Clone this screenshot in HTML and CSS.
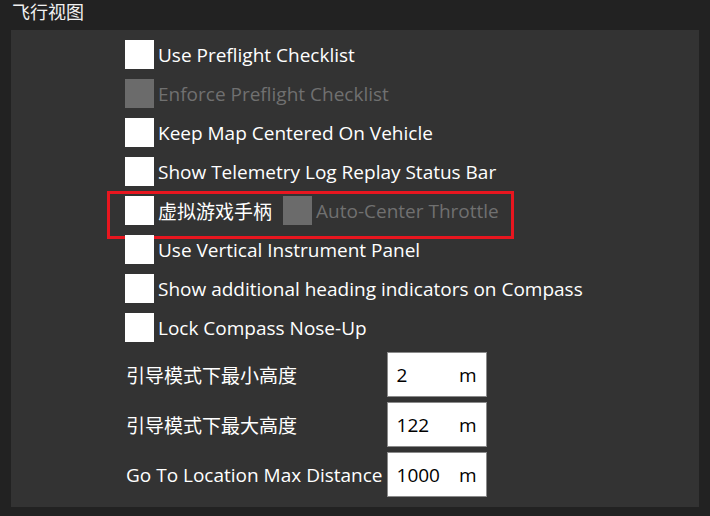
FILE: index.html
```html
<!DOCTYPE html>
<html lang="zh">
<head>
<meta charset="utf-8">
<title>飞行视图</title>
<link rel="stylesheet" href="styles.css">
</head>
<body>
<div class="title">飞行视图</div>
<div class="panel">
  <div class="checks">
    <div class="row"><span class="box"></span><span class="lbl">Use Preflight Checklist</span></div>
    <div class="row disabled"><span class="box"></span><span class="lbl">Enforce Preflight Checklist</span></div>
    <div class="row"><span class="box"></span><span class="lbl">Keep Map Centered On Vehicle</span></div>
    <div class="row"><span class="box"></span><span class="lbl">Show Telemetry Log Replay Status Bar</span></div>
    <div class="row joy">
      <span class="box"></span><span class="lbl">虚拟游戏手柄</span>
      <span class="sub disabled"><span class="box"></span><span class="lbl">Auto-Center Throttle</span></span>
      <span class="highlight"></span>
    </div>
    <div class="row"><span class="box"></span><span class="lbl">Use Vertical Instrument Panel</span></div>
    <div class="row"><span class="box"></span><span class="lbl">Show additional heading indicators on Compass</span></div>
    <div class="row"><span class="box"></span><span class="lbl">Lock Compass Nose-Up</span></div>
  </div>
  <div class="fields">
    <span class="flbl">引导模式下最小高度</span>
    <span class="field"><span>2</span><span>m</span></span>
    <span class="flbl">引导模式下最大高度</span>
    <span class="field"><span>122</span><span>m</span></span>
    <span class="flbl">Go To Location Max Distance</span>
    <span class="field"><span>1000</span><span>m</span></span>
  </div>
</div>
</body>
</html>
```

FILE: styles.css
```css
html, body {
  margin: 0;
  padding: 0;
  background: #222222;
  width: 710px;
  height: 516px;
  overflow: hidden;
}
body {
  font-family: "Open Sans", "Noto Sans CJK SC", sans-serif;
  color: #ffffff;
}
.title {
  height: 30px;
  padding-left: 12px;
  font-size: 18px;
  line-height: 24px;
  color: #f0f0f0;
}
.panel {
  margin-left: 11px;
  width: 688px;
  height: 477px;
  background: #333333;
  box-sizing: border-box;
  padding: 10px 0 0 114px;
}
.checks {
  display: flex;
  flex-direction: column;
  gap: 10px;
}
.row {
  position: relative;
  display: flex;
  align-items: center;
  height: 29px;
  font-size: 19px;
  white-space: nowrap;
}
.box {
  width: 29px;
  height: 29px;
  background: #ffffff;
  flex: none;
  margin-right: 4px;
}
.disabled .box {
  background: #6b6b6b;
}
.disabled .lbl {
  color: #707070;
}
.sub {
  display: flex;
  align-items: center;
  margin-left: 11px;
}
.highlight {
  position: absolute;
  left: -18px;
  top: -5px;
  width: 407px;
  height: 48px;
  box-sizing: border-box;
  border: 3px solid #e8161f;
}
.fields {
  margin-top: 10px;
  margin-left: 1px;
  display: grid;
  grid-template-columns: auto 100px;
  justify-content: start;
  column-gap: 4px;
  row-gap: 5px;
  font-size: 19px;
}
.flbl {
  display: flex;
  align-items: center;
  height: 45px;
  white-space: nowrap;
}
.field {
  height: 45px;
  box-sizing: border-box;
  background: #ffffff;
  border: 1px solid #8a8a8a;
  color: #000000;
  display: flex;
  align-items: center;
  justify-content: space-between;
  padding: 0 9px 0 9px;
}
```
